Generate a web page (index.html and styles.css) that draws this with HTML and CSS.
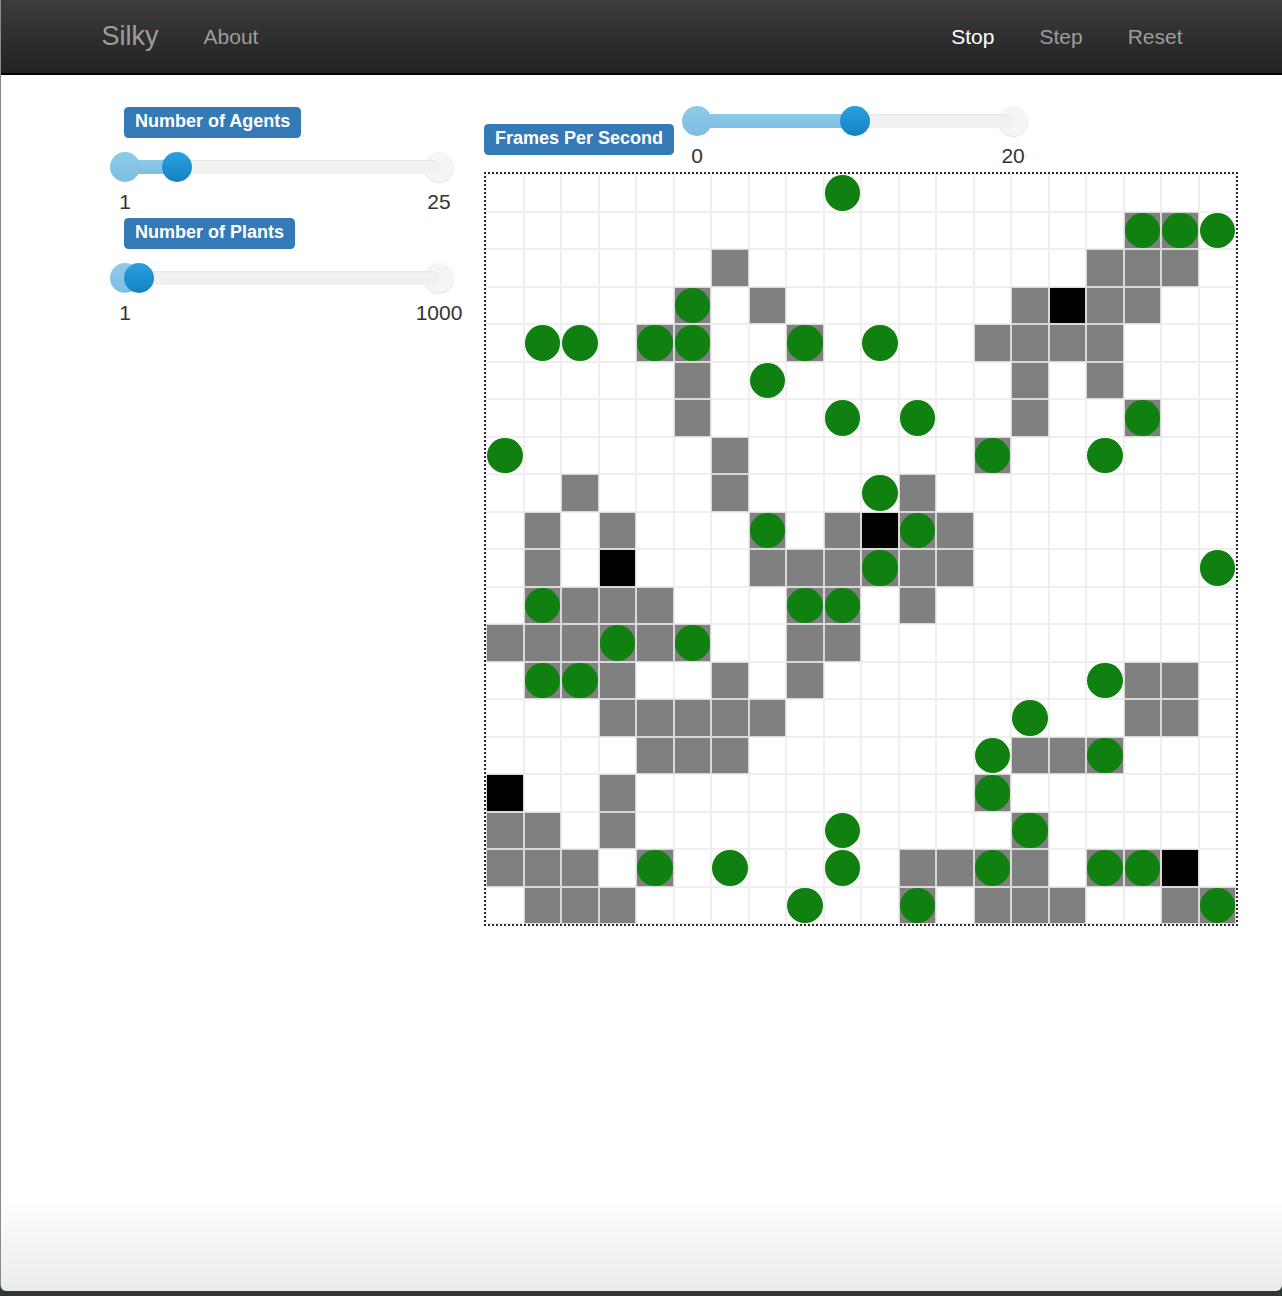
FILE: index.html
```html
<!DOCTYPE html>
<html lang="en">
<head>
<meta charset="utf-8">
<title>Silky</title>
<link rel="stylesheet" href="styles.css">
</head>
<body>
<div class="page">
  <nav class="navbar">
    <a class="brand" href="#">Silky</a>
    <a class="nav-link" href="#">About</a>
    <div class="nav-right">
      <a class="nav-link active" href="#">Stop</a>
      <a class="nav-link" href="#">Step</a>
      <a class="nav-link" href="#">Reset</a>
    </div>
  </nav>

  <main class="content">
    <aside class="sidebar">
      <div class="control">
        <span class="tag">Number of Agents</span>
        <div class="slider">
          <div class="slider-bar" style="--p: 0.1667">
            <span class="handle max"></span>
            <span class="track"></span>
            <span class="fill"></span>
            <span class="handle min"></span>
            <span class="handle val"></span>
          </div>
          <div class="scale"><span>1</span><span>25</span></div>
        </div>
      </div>
      <div class="control">
        <span class="tag">Number of Plants</span>
        <div class="slider">
          <div class="slider-bar" style="--p: 0.0446">
            <span class="handle max"></span>
            <span class="track"></span>
            <span class="fill"></span>
            <span class="handle min"></span>
            <span class="handle val"></span>
          </div>
          <div class="scale"><span>1</span><span>1000</span></div>
        </div>
      </div>
    </aside>

    <section class="sim">
      <div class="sim-head">
        <span class="tag fps-tag">Frames Per Second</span>
        <div class="slider fps">
          <div class="slider-bar" style="--p: 0.5">
            <span class="handle max"></span>
            <span class="track"></span>
            <span class="fill"></span>
            <span class="handle min"></span>
            <span class="handle val"></span>
          </div>
          <div class="scale"><span>0</span><span>20</span></div>
        </div>
      </div>
      <div class="grid" id="grid"></div>
    </section>
  </main>
</div>
<script src="script.js"></script>
</body>
</html>
```

FILE: styles.css
```css
* { box-sizing: border-box; }

html {
  background: #2e3636;
  height: 1296px;
}

body {
  margin: 0;
  font-family: "Liberation Sans", Arial, sans-serif;
  color: #333;
}

.page {
  min-height: 1291px;
  display: flex;
  flex-direction: column;
  border-left: 1px solid #8a8a8a;
  border-radius: 0 0 6px 6px;
  overflow: hidden;
  background: linear-gradient(to bottom, #ffffff 0, #ffffff 1195px, #ebebeb 100%);
}

/* ---------- navbar ---------- */
.navbar {
  height: 75px;
  display: flex;
  align-items: center;
  padding: 0 77px 0 78px;
  background: linear-gradient(to bottom, #3c3c3c 0%, #222222 100%);
  border-bottom: 2px solid #050505;
}

.navbar a {
  text-decoration: none;
  color: #9d9d9d;
}

.brand {
  font-size: 27px;
  padding: 0 22.5px;
}

.nav-link {
  font-size: 21px;
  padding: 0 22.5px;
}

.nav-link.active {
  color: #ffffff;
}

.nav-right {
  margin-left: auto;
  display: flex;
  align-items: center;
}

/* ---------- layout ---------- */
.content {
  flex: 1;
  display: flex;
  align-items: flex-start;
  padding: 31px 0 0 109px;
}

.sidebar {
  width: 374px;
  flex: none;
}

.control {
  display: flex;
  flex-direction: column;
  align-items: flex-start;
}

.control:first-child .tag {
  margin-top: 1px;
}

.control + .control {
  margin-top: 4px;
}

.control .slider {
  margin-top: 14px;
}

/* ---------- label tag ---------- */
.tag {
  display: inline-block;
  background: #337ab7;
  color: #fff;
  font-weight: bold;
  font-size: 18px;
  line-height: 19px;
  padding: 5px 11px 7px;
  border-radius: 4.5px;
  white-space: nowrap;
  margin-left: 14px;
}

/* ---------- slider ---------- */
.slider {
  width: 344px;
}

.slider-bar {
  position: relative;
  height: 30px;
}

.track,
.fill {
  position: absolute;
  top: 8px;
  height: 14px;
  border-radius: 7px;
}

.track {
  left: 15px;
  right: 15px;
  background: #f1f1f1;
  box-shadow: inset 0 1px 2px rgba(0, 0, 0, 0.05);
}

.fill {
  left: 15px;
  width: calc(var(--p) * (100% - 30px));
  background: linear-gradient(to bottom, #8ccbea, #7dbde0);
  border-radius: 0;
}

.handle {
  position: absolute;
  top: 0;
  width: 30px;
  height: 30px;
  border-radius: 50%;
}

.handle.min {
  left: 0;
  background: linear-gradient(to bottom, #8dcbea, #7fbee2);
}

.handle.max {
  right: 0;
  background: #f5f5f5;
  box-shadow: 0 1px 1px rgba(0, 0, 0, 0.12);
}

.handle.val {
  left: calc(var(--p) * (100% - 30px));
  background: linear-gradient(to bottom, #29a1df, #1482c3);
}

.scale {
  display: flex;
  justify-content: space-between;
  margin-top: 8px;
}

.scale span {
  width: 30px;
  display: flex;
  justify-content: center;
  white-space: nowrap;
  font-size: 21px;
  line-height: 24px;
  color: #333;
}

/* ---------- simulation ---------- */
.sim {
  display: flex;
  flex-direction: column;
  align-items: flex-start;
}

.sim-head {
  display: flex;
  align-items: flex-start;
}

.fps-tag {
  margin: 18px 0 0 0;
}

.slider.fps {
  width: 346px;
  margin-left: 8px;
}

.grid {
  margin-top: 4px;
  width: 754px;
  height: 754px;
  border: 2px dotted #2b2b2b;
  display: grid;
  grid-template-columns: repeat(20, 1fr);
  grid-template-rows: repeat(20, 1fr);
}

.c {
  border: 1px solid #efefef;
  background: #ffffff;
}

.c.g {
  background: #808080;
  border-color: #d9d9d9;
}

.c.b {
  background: #000000;
  border-color: #d9d9d9;
}

.c.p::after {
  content: "";
  display: block;
  width: 100%;
  height: 100%;
  border-radius: 50%;
  background: #108010;
}
```

FILE: script.js
```js
(function () {
  var rows = [
    ".........p..........",
    ".................qqp",
    "......g.........ggg.",
    ".....q.g......gbgg..",
    ".pp.qq..q.p..gggg...",
    ".....g.p......g.g...",
    ".....g...p.p..g..q..",
    "p.....g......q..p...",
    "..g...g...pg........",
    ".g.g...q.gbqg.......",
    ".g.b...gggqgg......p",
    ".qggg...qq.g........",
    "gggqgq..gg..........",
    ".qqg..g.g.......pgg.",
    "...ggggg......p..gg.",
    "....ggg......pggq...",
    "b..g.........q......",
    "gg.g.....p....q.....",
    "ggg.q.p..p.ggqg.qqb.",
    ".ggg....p..q.ggg..gq"
  ];
  var map = { ".": "c", "g": "c g", "b": "c b", "p": "c p", "q": "c g p" };
  var grid = document.getElementById("grid");
  rows.forEach(function (row) {
    for (var i = 0; i < row.length; i++) {
      var s = document.createElement("span");
      s.className = map[row.charAt(i)];
      grid.appendChild(s);
    }
  });
})();
```
